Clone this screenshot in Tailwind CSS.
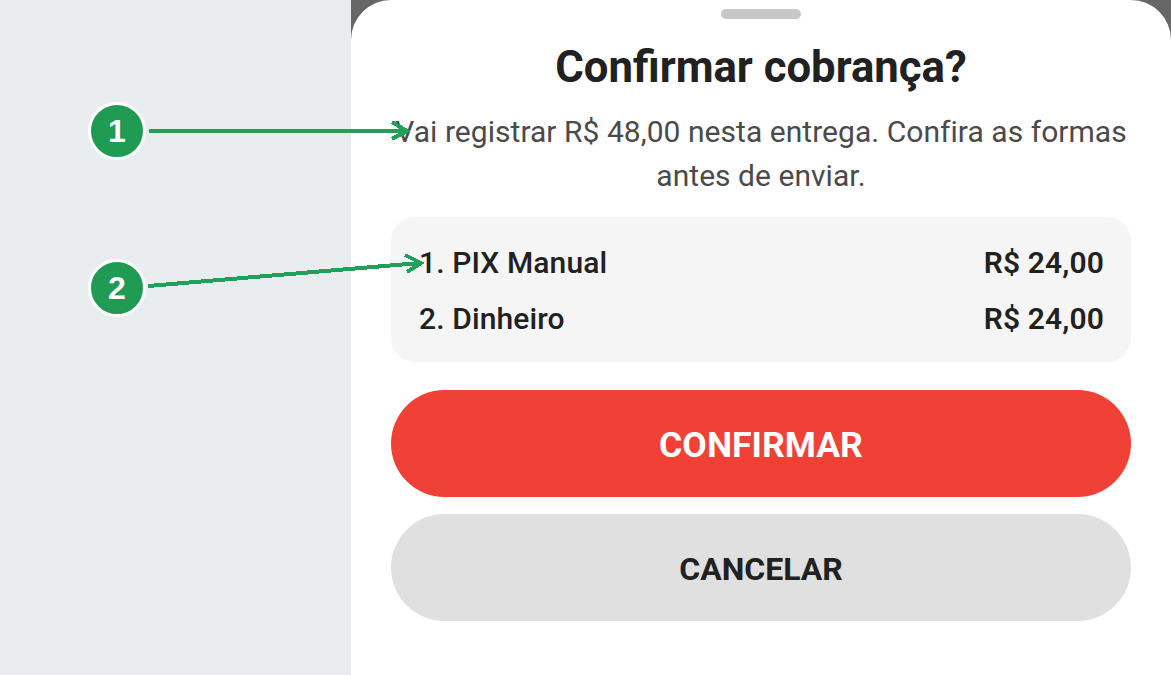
<!DOCTYPE html>
<html lang="en">
  <head>
    <meta charset="UTF-8" />
    <meta name="viewport" content="width=device-width, initial-scale=1.0" />
    <title>Confirmar cobrança</title>
    <script src="https://cdn.jsdelivr.net/npm/@tailwindcss/browser@4"></script>
  </head>
  <body class="relative h-[675px] w-[1171px] overflow-hidden font-['Roboto',sans-serif]">
    <div class="flex h-full">
      <div class="w-[351px] bg-[#e9edf0]"></div>
      <div class="flex-1 bg-[#666666]">
        <div class="h-full rounded-t-[40px] bg-white px-10 pt-[9px]">
          <div class="mx-auto h-[10px] w-[80px] rounded-full bg-[#c8c8c8]"></div>
          <h1 class="mt-[21px] text-center text-[43.7px] leading-[54px] font-bold text-[#212121]">Confirmar cobrança?</h1>
          <p class="mt-[16px] text-center text-[30px] leading-[44px] tracking-[0.04px] text-[#4a4a4a]">Vai registrar R$ 48,00 nesta entrega. Confira as formas antes de enviar.</p>

          <div class="mt-[19px] flex h-[145px] flex-col justify-center gap-[22px] rounded-[24px] bg-[#f5f5f5] pt-[3px] pr-[27px] pl-7">
            <div class="flex justify-between text-[30px] leading-[34px] font-medium tracking-[0.12px] text-[#212121]">
              <span>1. PIX Manual</span>
              <span class="font-semibold">R$ 24,00</span>
            </div>
            <div class="flex justify-between text-[30px] leading-[34px] font-medium tracking-[0.12px] text-[#212121]">
              <span>2. Dinheiro</span>
              <span class="font-semibold">R$ 24,00</span>
            </div>
          </div>

          <button class="mt-[28px] block h-[107px] w-full rounded-full bg-[#ef4136] pt-[4px] text-[35.6px] font-bold text-white">CONFIRMAR</button>
          <button class="mt-[17px] block h-[107px] w-full rounded-full bg-[#e0e0e0] pt-[2px] text-[32px] font-bold text-[#212121]">CANCELAR</button>
        </div>
      </div>
    </div>

    <!-- callouts -->
    <svg class="absolute top-0 left-0" width="1171" height="675" fill="none" stroke="#22a05a" stroke-width="4" shape-rendering="crispEdges">
      <path d="M149 131H406" />
      <path d="M392 122L407 131L392 139" />
      <path d="M148 286L420 263" />
      <path d="M405 255L421 263L407 272" />
    </svg>
    <div class="absolute top-[102px] left-[88px] flex h-[58px] w-[58px] items-center justify-center rounded-full border-[3px] border-white bg-[#1f9b54] font-['Liberation_Sans',sans-serif] text-[32px] font-bold text-white">1</div>
    <div class="absolute top-[259px] left-[88px] flex h-[58px] w-[58px] items-center justify-center rounded-full border-[3px] border-white bg-[#1f9b54] font-['Liberation_Sans',sans-serif] text-[32px] font-bold text-white">2</div>
  </body>
</html>
